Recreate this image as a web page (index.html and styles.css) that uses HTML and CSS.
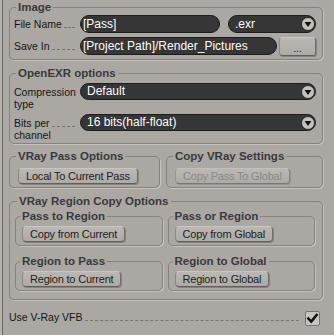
FILE: index.html
```html
<!DOCTYPE html>
<html>
<head>
<meta charset="utf-8">
<link rel="stylesheet" href="styles.css">
</head>
<body>
<div class="panel">
  <fieldset class="grp grp-image">
    <legend>Image</legend>
    <div class="row">
      <div class="lbl"><span>File Name</span><i class="dash"></i></div>
      <div class="field">[Pass]</div>
      <div class="select sel-ext"><span>.exr</span><svg class="arrow" width="14" height="14" viewBox="0 0 14 14"><circle cx="7" cy="7" r="6.5" fill="#c4c0bc" stroke="#2a2a2a" stroke-width="1"/><path d="M3.6 5 L10.4 5 L7 10 Z" fill="#111"/></svg></div>
    </div>
    <div class="row">
      <div class="lbl"><span>Save In</span><i class="dash"></i></div>
      <div class="field">[Project Path]/Render_Pictures</div>
      <button class="btn btn-browse">...</button>
    </div>
  </fieldset>

  <fieldset class="grp grp-exr">
    <legend>OpenEXR options</legend>
    <div class="row row-top">
      <div class="lbl2"><div>Compression</div><div>type</div></div>
      <div class="select"><span>Default</span><svg class="arrow" width="14" height="14" viewBox="0 0 14 14"><circle cx="7" cy="7" r="6.5" fill="#c4c0bc" stroke="#2a2a2a" stroke-width="1"/><path d="M3.6 5 L10.4 5 L7 10 Z" fill="#111"/></svg></div>
    </div>
    <div class="row row-top">
      <div class="lbl2"><div class="lead"><span>Bits per</span><i class="dash"></i></div><div>channel</div></div>
      <div class="select"><span>16 bits(half-float)</span><svg class="arrow" width="14" height="14" viewBox="0 0 14 14"><circle cx="7" cy="7" r="6.5" fill="#c4c0bc" stroke="#2a2a2a" stroke-width="1"/><path d="M3.6 5 L10.4 5 L7 10 Z" fill="#111"/></svg></div>
    </div>
  </fieldset>

  <div class="pair">
    <fieldset class="grp half">
      <legend>VRay Pass Options</legend>
      <button class="btn">Local To Current Pass</button>
    </fieldset>
    <fieldset class="grp half">
      <legend>Copy VRay Settings</legend>
      <button class="btn" disabled>Copy Pass To Global</button>
    </fieldset>
  </div>

  <fieldset class="grp grp-region">
    <legend>VRay Region Copy Options</legend>
    <div class="subgrid">
      <fieldset class="sub">
        <legend>Pass to Region</legend>
        <button class="btn">Copy from Current</button>
      </fieldset>
      <fieldset class="sub">
        <legend>Pass or Region</legend>
        <button class="btn">Copy from Global</button>
      </fieldset>
      <fieldset class="sub">
        <legend>Region to Pass</legend>
        <button class="btn">Region to Current</button>
      </fieldset>
      <fieldset class="sub">
        <legend>Region to Global</legend>
        <button class="btn">Region to Global</button>
      </fieldset>
    </div>
  </fieldset>

  <div class="vfb">
    <span>Use V-Ray VFB</span><i class="dash"></i>
    <span class="check"><svg width="13" height="13" viewBox="0 0 13 13"><path d="M2.4 6.6 L5.3 9.6 L10.6 3" fill="none" stroke="#111" stroke-width="2.6" stroke-linecap="square"/></svg></span>
  </div>
</div>
</body>
</html>
```

FILE: styles.css
```css
* { box-sizing: border-box; }
html, body { margin: 0; padding: 0; }
body {
  width: 334px;
  height: 335px;
  overflow: hidden;
  background: #b6b2ae;
  font-family: "Liberation Sans", Arial, sans-serif;
  font-size: 10.5px;
  color: #161616;
}
.panel {
  margin-left: 2px;
  width: 332px;
  height: 335px;
  border-left: 1px solid #6c6865;
  background: #aba7a3;
  padding: 1px 11px 0 6px;
  display: flex;
  flex-direction: column;
}
fieldset {
  margin: 0;
  min-width: 0;
  border: 1px solid #86827e;
  border-radius: 5px;
  box-shadow: 1px 1px 0 rgba(222, 218, 214, 0.55);
}
legend {
  font-weight: bold;
  font-size: 11.5px;
  line-height: 13px;
  color: #3a3a3a;
  padding: 0 2px;
  margin-left: 2px;
}
.grp-image {
  padding: 1px 6px 4px 4px;
  display: flex;
  flex-direction: column;
  gap: 4px;
}
.grp-exr {
  margin-top: 7px;
  padding: 3px 6px 2px 4px;
  display: flex;
  flex-direction: column;
  gap: 4px;
}
.pair {
  margin-top: 6px;
  display: grid;
  grid-template-columns: 151px 1fr;
  gap: 6px;
}
.half { padding: 5px 6px 3px 8px; }
.half legend { margin-left: -2px; }
.grp-region {
  margin-top: 7px;
  padding: 2px 7px 8px 5px;
}
.subgrid {
  display: grid;
  grid-template-columns: 1fr 1fr;
  gap: 9px 5px;
}
.sub { padding: 3px 6px 3px 6px; }
.sub legend { margin-left: -2px; }

.row {
  display: flex;
  align-items: center;
  height: 18px;
}
.row-top {
  align-items: flex-start;
  height: auto;
}
.lbl {
  width: 66px;
  flex: none;
  display: flex;
  align-items: baseline;
  line-height: 12px;
}
.lbl2 {
  width: 66px;
  flex: none;
  line-height: 12px;
  padding-top: 3px;
}
.lead {
  display: flex;
  align-items: baseline;
}
.dash {
  flex: 1;
  border-bottom: 1px dashed #7a7672;
  margin: 0 5px 0 2px;
}
.field {
  flex: 1;
  min-width: 0;
  height: 18px;
  background: #363636;
  border: 1px solid #1d1d1d;
  border-radius: 9px;
  color: #fff;
  font-size: 12px;
  line-height: 16px;
  padding-left: 2px;
  white-space: nowrap;
  overflow: hidden;
}
.select {
  flex: 1;
  display: flex;
  align-items: center;
  justify-content: space-between;
  height: 17px;
  background: #363636;
  border: 1px solid #1d1d1d;
  border-radius: 9px;
  color: #fff;
  font-size: 12px;
  line-height: 15px;
  padding-left: 6px;
  padding-right: 0;
  white-space: nowrap;
}
.sel-ext {
  flex: none;
  width: 88px;
  height: 18px;
  margin-left: 8px;
}
.arrow { flex: none; display: block; }

.btn {
  display: block;
  height: 16px;
  padding: 0 7px;
  font-family: "Liberation Sans", Arial, sans-serif;
  font-size: 11px;
  letter-spacing: -0.2px;
  line-height: 14px;
  color: #1e1e1e;
  background: linear-gradient(#bbb7b3, #aeaaa6);
  border: 1px solid;
  border-color: #c9c5c1 #716d6a #625e5b #8b8784;
  border-radius: 4px;
  box-shadow: 1px 1px 0 rgba(90, 86, 83, 0.45);
  white-space: nowrap;
}
.btn:disabled {
  color: #8d8985;
  border-color: #c2beba #85817e #7c7875 #99958f;
  box-shadow: 1px 1px 0 rgba(110, 106, 103, 0.3);
}
.btn-browse {
  flex: none;
  width: 37px;
  height: 19px;
  margin-left: 2px;
  padding: 4px 0 0;
  line-height: 12px;
  text-align: center;
  border-radius: 3px;
}

.vfb {
  margin-top: 11px;
  display: flex;
  align-items: baseline;
  height: 15px;
  padding-left: 0;
}
.vfb .dash { margin: 0 6px 0 2px; }
.check {
  align-self: center;
  width: 15px;
  height: 15px;
  margin-right: 3px;
  background: #c8c4c0;
  border: 1px solid #77736f;
  border-radius: 2px;
  display: flex;
  align-items: center;
  justify-content: center;
}
.check svg { display: block; flex: none; }
```
